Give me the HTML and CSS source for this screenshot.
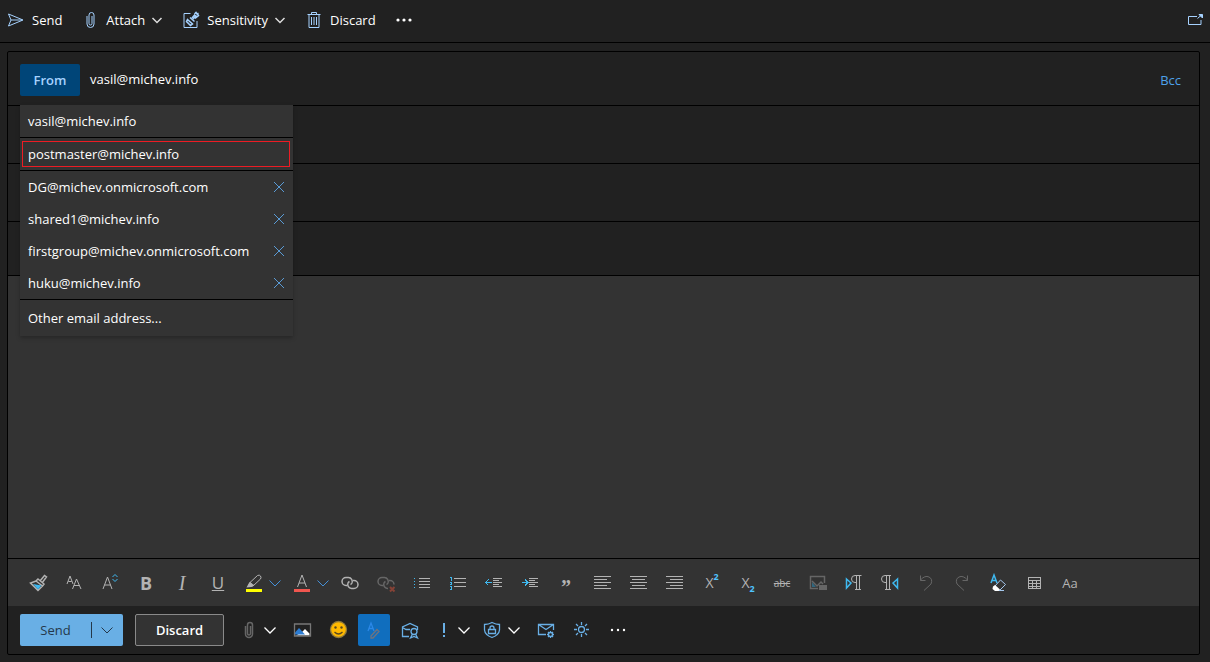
FILE: index.html
```html
<!DOCTYPE html>
<html lang="en">
<head>
  <meta charset="UTF-8">
  <meta name="viewport" content="width=device-width, initial-scale=1.0">
  <title>New message</title>
  <link rel="stylesheet" href="styles.css">
</head>
<body>
  <!-- Command bar -->
  <header class="command-bar">
    <button class="command send">
      <svg class="icon" viewBox="0 0 20 20"><path d="M2.500 4 17 10 2.500 16 5 10zM5 10h11"/></svg>
      <span>Send</span>
    </button>
    <button class="command attach">
      <svg class="icon" viewBox="0 0 20 20"><path d="M7 6v8a3.500 3.500 0 0 0 7 0V5a2.500 2.500 0 0 0-5 0v8.500a1.500 1.500 0 0 0 3 0V6"/></svg>
      <span>Attach</span>
      <svg class="chevron" viewBox="0 0 12 12"><path d="M1.500 4 6 8.500 10.500 4"/></svg>
    </button>
    <button class="command sensitivity">
      <svg class="icon" viewBox="0 0 20 20"><path d="M9.500 3.500H3v14h13V11"/><path class="thick" d="m6.500 9.500 5 4.500-2 1.500-4-4zM9 7.500l4.500 4M11 8l2.500-3 1 1M12 9l3.500-3.500M13.500 4l1.500-1.500 1 1.500 1.500-1M14 8.500l3.500-3-1-1.500"/></svg>
      <span>Sensitivity</span>
      <svg class="chevron" viewBox="0 0 12 12"><path d="M1.500 4 6 8.500 10.500 4"/></svg>
    </button>
    <button class="command discard">
      <svg class="icon" viewBox="0 0 20 20"><path d="M3.500 4.500h13M7.500 4.500v-2h5v2M5 4.500v13h10v-13M7.500 7v8M10 7v8M12.500 7v8"/></svg>
      <span>Discard</span>
    </button>
    <button class="command more" aria-label="More commands">
      <svg class="icon dots" viewBox="0 0 20 20"><circle cx="4" cy="10" r="1.600"/><circle cx="10" cy="10" r="1.600"/><circle cx="16" cy="10" r="1.600"/></svg>
    </button>
    <button class="command popout" aria-label="Open in new window">
      <svg class="icon" viewBox="0 0 20 20"><path d="M12 6.500H3.500v8h12.500V10M12.500 8.500 16.500 5"/><path d="M14 4.500h3.500V8z" fill="currentColor"/></svg>
    </button>
  </header>

  <main class="compose">
    <div class="row from-row">
      <button class="from-btn">From</button>
      <span class="from-address">vasil@michev.info</span>
      <a class="bcc" href="#">Bcc</a>

      <!-- From address picker -->
      <ul class="from-menu">
        <li><button class="address">vasil@michev.info</button></li>
        <li class="divided"><button class="address selected">postmaster@michev.info</button></li>
        <li class="divided">
          <button class="address">DG@michev.onmicrosoft.com</button>
          <button class="remove" aria-label="Remove DG"><svg viewBox="0 0 12 12"><path d="m1 1 10 10M11 1 1 11"/></svg></button>
        </li>
        <li>
          <button class="address">shared1@michev.info</button>
          <button class="remove" aria-label="Remove shared1"><svg viewBox="0 0 12 12"><path d="m1 1 10 10M11 1 1 11"/></svg></button>
        </li>
        <li>
          <button class="address">firstgroup@michev.onmicrosoft.com</button>
          <button class="remove" aria-label="Remove firstgroup"><svg viewBox="0 0 12 12"><path d="m1 1 10 10M11 1 1 11"/></svg></button>
        </li>
        <li>
          <button class="address">huku@michev.info</button>
          <button class="remove" aria-label="Remove huku"><svg viewBox="0 0 12 12"><path d="m1 1 10 10M11 1 1 11"/></svg></button>
        </li>
        <li class="divided other"><button class="address">Other email address...</button></li>
      </ul>
    </div>
    <div class="row tall"><input type="text" aria-label="To"></div>
    <div class="row tall"><input type="text" aria-label="Cc"></div>
    <div class="row"><input type="text" aria-label="Subject"></div>

    <textarea class="editor" aria-label="Message body"></textarea>

    <!-- Formatting toolbar -->
    <div class="format-bar">
      <button aria-label="Format painter"><svg class="icon" viewBox="0 0 20 20"><path class="thick" d="m12 8 4.500-5.500 2 1.500-4.500 6M10 6l6 5-1.500 2L8 8zM8 8l-5.500 2 7.500 7.500 4.500-4.500"/><path class="fill-cyan" d="m5 11 8.500 1.500-3.500 4z"/></svg></button>
      <button aria-label="Font"><svg class="icon" viewBox="0 0 20 20"><path d="m3 11 3-8 3 8M4.300 8.500h3.400M8.500 16l4-10 4.500 10M10 12.500h5.500"/></svg></button>
      <button aria-label="Font size"><svg class="icon" viewBox="0 0 20 20"><path d="M3 16 7.500 4 12 16M4.500 12h6"/><path class="cyan" d="m12.500 4 2.500-2.500L17.500 4M12.500 6l2.500 2.500L17.500 6"/></svg></button>
      <button class="bold" aria-label="Bold">B</button>
      <button class="italic" aria-label="Italic">I</button>
      <button class="underline" aria-label="Underline">U</button>
      <button class="split" aria-label="Highlight">
        <svg class="icon" viewBox="0 0 20 20"><path d="m6 9.500 7.500-7q2-1 3 .500t0 3L9 13l-5 .500zM6 9.500l4 3"/><path class="fill-gray" d="m5.500 9-3 5.500 5-.500 2-1.500z"/><path class="fill-yellow" d="M2 16h16v3H2z"/></svg>
        <svg class="chevron blue" viewBox="0 0 12 12"><path d="M.500 3.500 6 9l5.500-5.500"/></svg>
      </button>
      <button class="split" aria-label="Font color">
        <svg class="icon" viewBox="0 0 20 20"><path d="m5.500 14 4.500-12 4.500 12M7 10h6"/><path class="fill-red" d="M2 16h16v3H2z"/></svg>
        <svg class="chevron blue" viewBox="0 0 12 12"><path d="M.500 3.500 6 9l5.500-5.500"/></svg>
      </button>
      <button aria-label="Insert link"><svg class="icon" viewBox="0 0 20 20"><path class="thick" d="M7 12.500H6A4 4 0 0 1 6 4.500h2.500a4 4 0 0 1 3.500 5.500q-.500 1-1.500 1.500M13 7.500h1a4 4 0 0 1 0 8h-2.500A4 4 0 0 1 8 10q.500-1 1.500-1.500"/></svg></button>
      <button aria-label="Remove link"><svg class="icon dim" viewBox="0 0 20 20"><path class="thick" d="M7 12.500H6A4 4 0 0 1 6 4.500h2.500a4 4 0 0 1 3.500 5.500q-.500 1-1.500 1.500M13 7.500h1a4 4 0 0 1 4 4M12 15.500h-.500A4 4 0 0 1 8 10q.500-1 1.500-1.500"/><path class="cross" d="m14 14 4.500 4.500M18.500 14 14 18.500"/></svg></button>
      <button aria-label="Bullets"><svg class="icon crisp" viewBox="0 0 20 20"><path d="M7 5.500h11M7 8.500h11M7 11.500h11M7 14.500h11"/><path class="cyan" d="M2 5.500h1M2 8.500h1M2 11.500h1M2 14.500h1"/></svg></button>
      <button aria-label="Numbering"><svg class="icon crisp" viewBox="0 0 20 20"><path d="M6 5.500h12M6 9.500h12M6 13.500h12"/><path class="cyan" d="M2 4.500h1.500v3M2 9.500h1.500v2H2M2 13.500h1.500v3H2"/></svg></button>
      <button aria-label="Decrease indent"><svg class="icon crisp" viewBox="0 0 20 20"><path d="M9 5.500h9M9 7.500h6M9 9.500h9M9 11.500h6M9 13.500h9"/><path class="cyan" d="M1.500 9.500H8M4.500 6.500l-3 3 3 3"/></svg></button>
      <button aria-label="Increase indent"><svg class="icon crisp" viewBox="0 0 20 20"><path d="M9 5.500h9M9 7.500h6M9 9.500h9M9 11.500h6M9 13.500h9"/><path class="cyan" d="M1.500 9.500H8M5 6.500l3 3-3 3"/></svg></button>
      <button class="quote" aria-label="Quote">”</button>
      <button aria-label="Align left"><svg class="icon crisp" viewBox="0 0 20 20"><path d="M2 3.500h17M2 6.500h13M2 9.500h17M2 12.500h13M2 15.500h17"/></svg></button>
      <button aria-label="Align center"><svg class="icon crisp" viewBox="0 0 20 20"><path d="M2 3.500h17M4 6.500h13M2 9.500h17M4 12.500h13M2 15.500h17"/></svg></button>
      <button aria-label="Align right"><svg class="icon crisp" viewBox="0 0 20 20"><path d="M2 3.500h17M6 6.500h13M2 9.500h17M6 12.500h13M2 15.500h17"/></svg></button>
      <button class="script" aria-label="Superscript">X<sup>2</sup></button>
      <button class="script" aria-label="Subscript">X<sub>2</sub></button>
      <button class="strike" aria-label="Strikethrough">abc</button>
      <button aria-label="Insert picture"><svg class="icon dim" viewBox="0 0 20 20"><path class="thick" d="M10 15.500H2.500v-12h14V10"/><path class="fill-teal" d="m4 14v-5l4 5z"/><path class="thick" d="m4 8 5 5 4-4 2 2"/><path class="fill-gray" d="M11 12h8v5h-8z"/></svg></button>
      <button aria-label="Left to right"><svg class="icon" viewBox="0 0 20 20"><path class="cyan thick" d="m2.500 6 4.500 4-4.500 5z"/><path d="M17.500 2.500H11a3.500 3.500 0 0 0 0 7h1.500M12.500 2.500v14M15.500 2.500v14M11 16.500h6"/></svg></button>
      <button aria-label="Right to left"><svg class="icon" viewBox="0 0 20 20"><path class="cyan thick" d="m17.500 6-4.500 4 4.500 5z"/><path d="M11 2.500H5a3.500 3.500 0 0 0 0 7h1.500M6.500 2.500v14M9.500 2.500v14M5 16.500h6"/></svg></button>
      <button aria-label="Undo"><svg class="icon dim" viewBox="0 0 20 20"><path d="M4.500 2.500v5h5M4.500 7Q9 2 13 4t2 7l-7 6.500"/></svg></button>
      <button aria-label="Redo"><svg class="icon dim" viewBox="0 0 20 20"><path d="M15.500 2.500v5h-5M15.500 7Q11 2 7 4t-2 7l7 6.500"/></svg></button>
      <button aria-label="Clear formatting"><svg class="icon" viewBox="0 0 20 20"><path class="cyan thick" d="m3 10 3-8 3 8M4 7.500h4"/><path class="pale" d="m7 13 5.500-6 5 4.500-6 6H7.500L5 15zM11 17.500h5"/><path class="fill-white" d="m5 13.500 2-1.500 5 4.500-1.500 1.500H7L4.500 16z"/></svg></button>
      <button aria-label="Insert table"><svg class="icon crisp" viewBox="0 0 20 20"><path d="M4 4.500h13M4 7.500h13M4 10.500h13M4 13.500h13M4 15.500h13M4.500 4v12M8.500 8v8M12.500 8v8M16.500 4v12"/></svg></button>
      <button class="case" aria-label="Change case">Aa</button>
    </div>

    <!-- Bottom actions -->
    <div class="action-bar">
      <div class="send-group">
        <button class="send-btn">Send</button>
        <button class="send-more" aria-label="More send options"><svg class="chevron" viewBox="0 0 12 12"><path d="M.500 3.500 6 9l5.500-5.500"/></svg></button>
      </div>
      <button class="discard-btn">Discard</button>
      <div class="tools">
        <button class="split" aria-label="Attach">
          <svg class="icon clip" viewBox="0 0 20 20"><path class="thick" d="M7.500 6v8a3.500 3.500 0 0 0 7 0V5a2.500 2.500 0 0 0-5 0v8.500a1.500 1.500 0 0 0 3 0V6"/></svg>
          <svg class="chevron" viewBox="0 0 12 12"><path d="M.500 3.500 6 9l5.500-5.500"/></svg>
        </button>
        <button aria-label="Insert pictures inline"><svg class="icon" viewBox="0 0 20 20"><path class="fill-white" d="m10 12 3-3 4.500 4.500V15.500H4z"/><path class="fill-blue" d="M3 14.500v-2L7 8l6 6.500z"/><path class="frame" d="M2.500 4h16v12h-16z"/></svg></button>
        <button aria-label="Insert emoji"><svg class="icon" viewBox="0 0 20 20"><circle class="face" cx="10.500" cy="9.500" r="8"/><circle class="fill-dark" cx="7.500" cy="7.500" r="1.200"/><circle class="fill-dark" cx="13.500" cy="7.500" r="1.200"/><path class="smile" d="M6.500 12q4 4 8 0"/></svg></button>
        <button class="active" aria-label="Formatting options"><svg class="icon" viewBox="0 0 20 20"><path class="letter" d="m4 11 3-8 3 8M5 8.500h4"/><path class="pencil" d="m7 16 6-6.500 2 2L9 18H7z"/></svg></button>
        <button aria-label="Encrypt"><svg class="icon" viewBox="0 0 20 20"><path d="M9 16.500H2.500V7L10 3.500 17.500 7v3M2.500 7.500 6 9.500h4"/><circle cx="14" cy="11.500" r="3"/><path d="m12.500 14-2 4 3.500-1.500 3.500 1.500-2-4"/></svg></button>
        <button class="split importance" aria-label="Importance">
          <svg class="icon small" viewBox="0 0 16 20"><path class="bold-stroke" d="M8 3v10M8 15v2"/></svg>
          <svg class="chevron" viewBox="0 0 12 12"><path d="M.500 3.500 6 9l5.500-5.500"/></svg>
        </button>
        <button class="split" aria-label="Sensitivity">
          <svg class="icon" viewBox="0 0 20 20"><path d="M10 2.500q4 2 7.500 2V10q-.500 5-7.500 7.500Q3 15 2.500 10V4.500q4 0 7.500-2zM6.500 9.500h7v4h-7zM8 9.500V8a2 2 0 0 1 4 0v1.500"/></svg>
          <svg class="chevron" viewBox="0 0 12 12"><path d="M.500 3.500 6 9l5.500-5.500"/></svg>
        </button>
        <button aria-label="Message options"><svg class="icon" viewBox="0 0 20 20"><path d="M10 14.500H2.500v-10h15V10M2.500 4.500 10 9.500l7.500-5"/><circle cx="14.500" cy="14.500" r="2"/><path d="M14.500 11v1.500M14.500 16.500V18M11 14.500h1.500M16.500 14.500H18M12 12l1 1M16 16l1 1M17 12l-1 1M13 16l-1 1"/></svg></button>
        <button aria-label="Toggle light mode"><svg class="icon" viewBox="0 0 20 20"><circle cx="9.500" cy="9.500" r="3"/><path d="M9.500 2v3M9.500 14v3M2 9.500h3M14 9.500h3M4 4l2 2M13 13l2 2M15 4l-2 2M6 13l-2 2"/></svg></button>
        <button aria-label="More options"><svg class="icon dots" viewBox="0 0 20 20"><circle cx="4" cy="10" r="1.200"/><circle cx="10" cy="10" r="1.200"/><circle cx="16" cy="10" r="1.200"/></svg></button>
      </div>
    </div>
  </main>
</body>
</html>
```

FILE: styles.css
```css
* {
  margin: 0;
  padding: 0;
  box-sizing: border-box;
}

body {
  font-family: "Open Sans", "Noto Sans", sans-serif;
  font-size: 13px;
  line-height: 20px;
  background-color: #212121;
  color: #fff;
  display: flex;
  flex-direction: column;
  min-height: 100vh;
}

button,
input,
textarea {
  font: inherit;
  color: inherit;
  background: none;
  border: none;
  outline: none;
}

button {
  cursor: pointer;
}

svg {
  display: block;
  flex: none;
  fill: none;
  stroke: currentColor;
}

.icon {
  width: 20px;
  height: 20px;
}

.chevron {
  width: 12px;
  height: 12px;
}

.dots {
  fill: currentColor;
  stroke: none;
}

/* Command bar */
.command-bar {
  display: flex;
  align-items: center;
  gap: 18px;
  height: 43px;
  padding: 0 5px 3px 6px;
  border-bottom: 1px solid #000;
}

.command {
  display: flex;
  align-items: center;
  gap: 6px;
}

.command .icon {
  color: #a6d2ff;
}

.command .chevron {
  stroke-width: 1.5;
  color: #ddd;
}

.command .dots {
  color: #fff;
}

.popout {
  margin-left: auto;
}

/* Compose pane */
.compose {
  flex: 1;
  display: flex;
  flex-direction: column;
  margin: 8px 10px 7px 7px;
  border: 1px solid #000;
  border-radius: 2px;
}

.row {
  display: flex;
  align-items: center;
  height: 54px;
  padding: 0 12px;
  border-bottom: 1px solid #000;
}

.row.tall {
  height: 58px;
}

.row input {
  flex: 1;
  height: 32px;
}

.from-row {
  position: relative;
  padding-top: 3px;
}

.from-btn {
  width: 60px;
  height: 32px;
  border-radius: 2px;
  background-color: #004578;
  color: #a6d2ff;
  font-weight: 600;
}

.from-address {
  margin-left: 10px;
  padding-bottom: 2px;
}

.bcc {
  margin-left: auto;
  padding-right: 6px;
  color: #4ea1ea;
  text-decoration: none;
}

.from-menu {
  position: absolute;
  top: 53px;
  left: 12px;
  z-index: 1;
  width: 273px;
  background-color: #333;
  list-style: none;
  box-shadow: 0 2px 4px rgba(0, 0, 0, 0.25);
}

.from-menu li {
  display: flex;
  align-items: center;
  height: 32px;
}

.from-menu .divided {
  height: 33px;
  border-top: 1px solid #000;
}

.from-menu .other {
  height: 37px;
}

.address {
  flex: 1;
  height: 28px;
  padding-left: 8px;
  text-align: left;
}

.address.selected {
  height: 26px;
  margin: 0 3px 0 2px;
  padding-left: 5px;
  border: 1px solid #ed1c24;
}

.remove {
  padding: 8px;
  color: #5a9bd5;
}

.remove svg {
  width: 12px;
  height: 12px;
}

.editor {
  flex: 1;
  min-height: 200px;
  padding: 12px;
  background-color: #333;
  resize: none;
}

/* Formatting toolbar */
.format-bar {
  display: flex;
  height: 48px;
  padding: 0 12px;
  border-top: 1px solid #000;
  background-color: #333;
  color: #b3b3b3;
}

.format-bar button {
  display: flex;
  align-items: center;
  justify-content: center;
  width: 36px;
}

.format-bar .split {
  gap: 5px;
  width: 48px;
  padding-left: 5px;
}

.crisp {
  shape-rendering: crispEdges;
}

.thick {
  stroke-width: 1.5;
}

.dim {
  opacity: 0.4;
}

.blue {
  color: #4490d8;
}

.cyan {
  stroke: #3fb9f0;
}

.pale {
  stroke: #a6c8ee;
}

.cross {
  stroke: #ff5a3c;
  stroke-width: 2;
}

.fill-cyan {
  fill: #3fb9f0;
  stroke: none;
}

.fill-gray {
  fill: #b3b3b3;
  stroke: none;
}

.fill-yellow {
  fill: #ff0;
  stroke: none;
}

.fill-red {
  fill: #f0564f;
  stroke: none;
}

.fill-teal {
  fill: #2fb5f0;
  stroke: none;
}

.fill-white {
  fill: #fff;
  stroke: none;
}

.fill-blue {
  fill: #2b7cd3;
  stroke: none;
}

.fill-dark {
  fill: #5a4a20;
  stroke: none;
}

.bold {
  font-size: 18px;
  font-weight: 700;
}

.italic {
  font-family: "Liberation Serif", serif;
  font-size: 20px;
  font-style: italic;
}

.underline {
  font-size: 17px;
  text-decoration: underline;
}

.format-bar .quote {
  padding-top: 8px;
  font-family: "Liberation Serif", serif;
  font-size: 20px;
  font-weight: 700;
}

.script {
  font-size: 14px;
}

.format-bar .script {
  padding-left: 4px;
}

.script sup,
.script sub {
  color: #4fc3ff;
  font-size: 9px;
  font-weight: 700;
  line-height: 10px;
}

.script sup {
  padding-bottom: 12px;
}

.script sub {
  padding-top: 12px;
}

.strike {
  font-size: 10px;
  text-decoration: line-through;
}

/* Bottom actions */
.action-bar {
  display: flex;
  align-items: center;
  height: 48px;
  padding: 0 12px;
}

.send-group {
  display: flex;
  align-items: center;
  width: 103px;
  height: 32px;
  border-radius: 2px;
  background-color: #69afe5;
  color: #25384a;
}

.send-btn {
  flex: 1;
}

.send-more {
  padding: 2px 10px 2px 9px;
  border-left: 1px solid #25384a;
}

.discard-btn {
  width: 89px;
  height: 32px;
  margin-left: 12px;
  border: 1px solid #8a8a8a;
  border-radius: 2px;
  background-color: #333;
  font-weight: 600;
}

.tools {
  display: flex;
  gap: 4px;
  margin-left: 8px;
  color: #69afe5;
}

.tools button {
  display: flex;
  align-items: center;
  height: 32px;
  padding: 0 6px;
}

.tools .icon {
  stroke-width: 1.3;
}

.tools .split {
  gap: 6px;
}

.tools .importance {
  padding: 0 2px 0 6px;
}

.tools .chevron,
.tools .dots {
  color: #fff;
}

.tools .chevron {
  stroke-width: 1.3;
}

.tools .clip {
  color: #666;
}

.tools .small {
  width: 16px;
}

.tools .active {
  border-radius: 2px;
  background-color: #106ebe;
}

.frame {
  stroke: #777;
}

.face {
  fill: #ffb900;
  stroke: #8f7a3c;
}

.smile {
  stroke: #5a4a20;
}

.letter {
  stroke: #2b88e8;
}

.pencil {
  stroke: #6e7480;
}

.bold-stroke {
  stroke-width: 2;
}
```
